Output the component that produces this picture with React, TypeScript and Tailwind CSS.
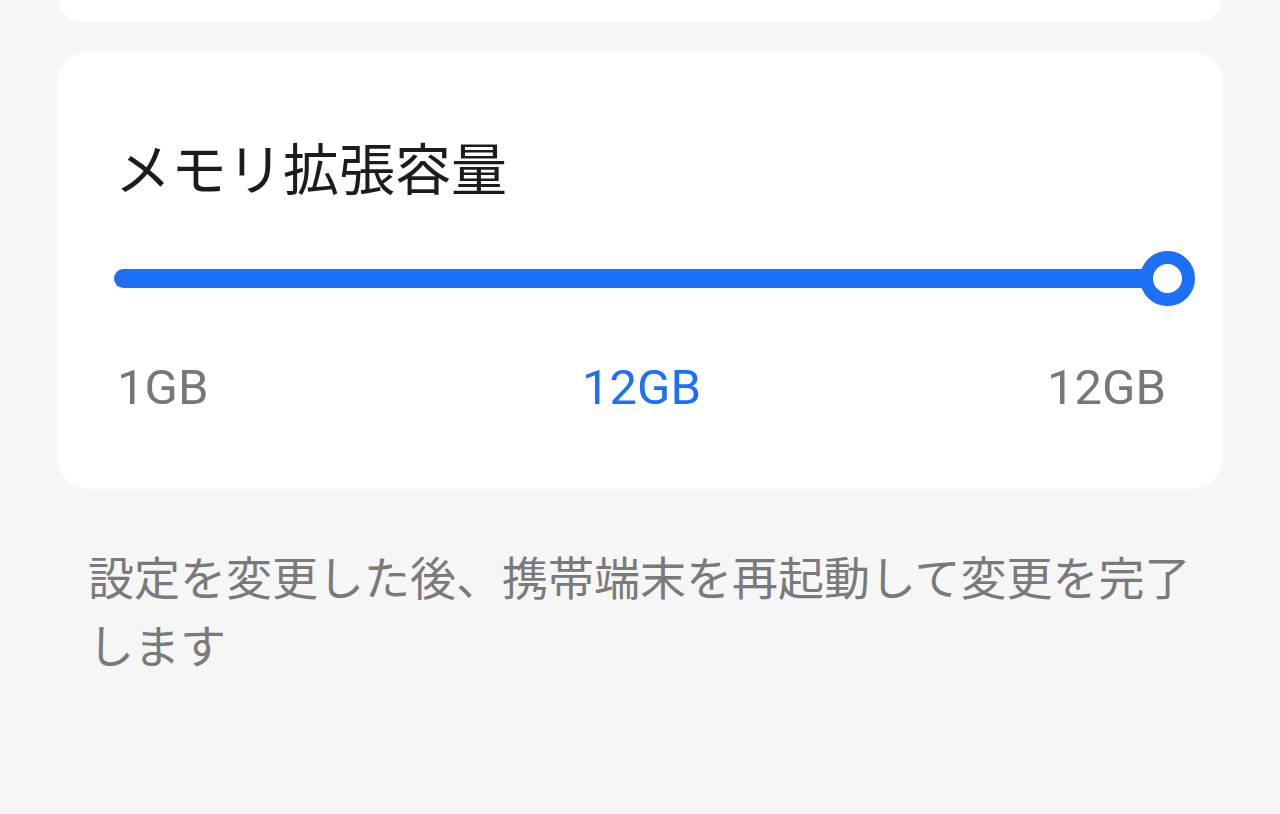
import React from "react";

export default function App() {
  const font = { fontFamily: '"Roboto", "Noto Sans CJK JP", sans-serif' };
  return (
    <div className="w-[1280px] h-[814px] bg-[#f6f6f6] overflow-hidden" style={font}>
      <div className="mx-[59px] h-[22px] bg-white rounded-b-[30px]" />
      <div className="mx-[57px] mt-[30px] h-[437px] bg-white rounded-[32px] pt-[86px] px-[60px]">
        <div className="text-[56px] leading-none text-[#1c1c1c] ml-[-2px]" style={{ fontFamily: '"Noto Sans CJK JP", sans-serif' }}>
          メモリ拡張容量
        </div>
        <div className="relative mt-[57px] h-[56px] mr-[-32px] ml-[-3px]">
          <div className="absolute left-0 right-[28px] top-[18px] h-[19px] rounded-full bg-[#1d6ff5]" />
          <div className="absolute right-0 top-0 w-[55px] h-[55px] rounded-full border-[13px] border-[#1d6ff5] bg-white" />
        </div>
        <div className="grid grid-cols-3 items-center mt-[56px] text-[49px] leading-none mr-[-3px]">
          <span className="text-[#777777]">1GB</span>
          <span className="text-[#1d6ff5] text-center">12GB</span>
          <span className="text-[#777777] text-right">12GB</span>
        </div>
      </div>
      <div
        className="mx-[88px] mt-[52px] text-[46px] leading-[68px] text-[#7a7a7a]"
        style={{ fontFamily: '"Noto Sans CJK JP", sans-serif' }}
      >
        設定を変更した後、携帯端末を再起動して変更を完了します
      </div>
    </div>
  );
}
